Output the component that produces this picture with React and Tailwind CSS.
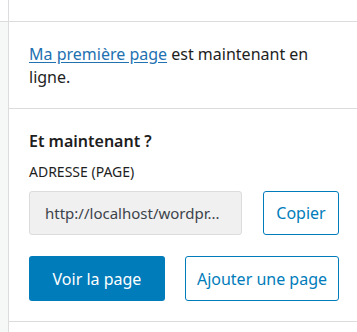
import React from 'react';

export default function App() {
  return (
    <div className="flex h-[332px] w-[357px] flex-col bg-white text-[#1e1e1e] font-['Noto_Sans',sans-serif]">
      <div className="flex h-[22px] shrink-0 border-b border-[#dcdcde]">
        <div className="w-[9px] shrink-0 border-r border-[#dcdcde]" />
      </div>
      <div className="flex flex-1">
        <div className="w-[9px] shrink-0 border-r border-[#dcdcde] bg-[#f6f7f7]" />
        <div className="flex min-w-0 flex-1 flex-col">
          <section className="border-b border-[#dcdcde] pl-5 pr-[18px] pt-[21px] pb-[19px]">
            <p className="pr-4 text-[16px] leading-[23px]">
              <a href="#" className="text-[#2271b1] underline underline-offset-2">
                Ma première page
              </a>{' '}
              est maintenant en ligne.
            </p>
          </section>
          <section className="border-b border-[#dcdcde] pl-5 pr-[18px] pt-[21px] pb-[20px]">
            <h3 className="text-[16px] font-semibold leading-[23px]">Et maintenant ?</h3>
            <div className="mt-[9px] text-[14px] leading-[20px]">ADRESSE (PAGE)</div>
            <div className="mt-[9px] flex gap-[21px]">
              <div className="flex h-[44px] min-w-0 flex-1 items-center overflow-hidden whitespace-nowrap rounded-[3px] border border-[#dcdcde] bg-[#f0f0f1] pl-[15px] pr-2 text-[15px] text-[#3c434a]">
                http://localhost/wordpr...
              </div>
              <button className="h-[44px] w-[76px] shrink-0 rounded-[3px] border border-[#007cba] bg-white text-[16px] text-[#007cba]">
                Copier
              </button>
            </div>
            <div className="mt-[21px] flex gap-[20px]">
              <button className="h-[45px] w-[136px] rounded-[3px] bg-[#007cba] text-[16px] text-white">
                Voir la page
              </button>
              <button className="h-[45px] w-[154px] rounded-[3px] border border-[#007cba] bg-white text-[16px] text-[#007cba]">
                Ajouter une page
              </button>
            </div>
          </section>
        </div>
      </div>
    </div>
  );
}
